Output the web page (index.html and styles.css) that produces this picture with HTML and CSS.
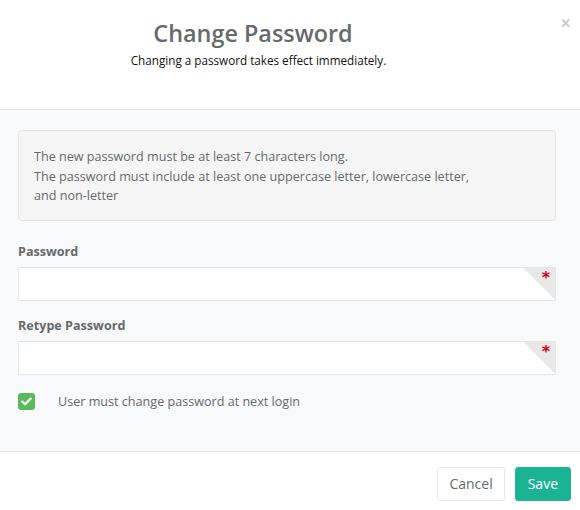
FILE: index.html
```html
<!DOCTYPE html>
<html>
<head>
<meta charset="utf-8">
<link rel="stylesheet" href="styles.css">
</head>
<body>
<div class="modal">
  <div class="modal-header">
    <button class="close" type="button">×</button>
    <h4 class="modal-title">Change Password</h4>
    <div class="modal-sub">Changing a password takes effect immediately.</div>
  </div>
  <div class="modal-body">
    <div class="well">
      The new password must be at least 7 characters long.<br>
      The password must include at least one uppercase letter, lowercase letter, <span class="nowrap">and non-letter</span>
    </div>
    <div class="form-group">
      <label class="label">Password</label>
      <div class="input-wrap">
        <input class="form-control" type="password">
        <span class="req"><span class="req-star">*</span></span>
      </div>
    </div>
    <div class="form-group">
      <label class="label">Retype Password</label>
      <div class="input-wrap">
        <input class="form-control" type="password">
        <span class="req"><span class="req-star">*</span></span>
      </div>
    </div>
    <div class="check-row">
      <span class="checkbox">
        <svg width="11" height="9" viewBox="0 0 11 9"><path d="M1.3 4.6 L4.2 7.3 L9.7 1.6" fill="none" stroke="#fff" stroke-width="2.2" stroke-linecap="round" stroke-linejoin="round"/></svg>
      </span>
      <span class="check-label">User must change password at next login</span>
    </div>
  </div>
  <div class="modal-footer">
    <button class="btn btn-white" type="button">Cancel</button>
    <button class="btn btn-primary" type="button">Save</button>
  </div>
</div>
</body>
</html>
```
FILE: styles.css
```css
* { box-sizing: border-box; }
html, body { margin: 0; padding: 0; background: #fff; }
body {
  font-family: "Open Sans", "Liberation Sans", sans-serif;
  font-size: 12.6px;
  color: #676a6c;
  width: 580px;
  height: 510px;
  overflow: hidden;
}
.modal { width: 580px; }
.modal-header {
  position: relative;
  height: 110px;
  padding: 14px 78px 0 15px;
  border-bottom: 1px solid #e5e5e5;
  text-align: center;
  background: #fff;
}
.modal-title {
  margin: 0 11px 0 0;
  font-size: 23.4px;
  font-weight: 600;
  line-height: 38px;
  color: #676a6c;
}
.modal-sub {
  font-size: 11.7px;
  line-height: 18px;
  color: #111;
  margin-top: -1px;
}
.close {
  position: absolute;
  top: 11px;
  right: 9px;
  border: 0;
  background: none;
  padding: 0;
  font-family: "Open Sans", sans-serif;
  font-size: 19px;
  font-weight: 700;
  line-height: 24px;
  color: #000;
  opacity: 0.2;
}
.modal-body {
  background: #f8f9fa;
  padding: 20px 24px 39px 18px;
  border-bottom: 1px solid #e5e5e5;
}
.well {
  background: #f5f5f5;
  border: 1px solid #e3e3e3;
  border-radius: 4px;
  padding: 16px 15px 14px 15px;
  line-height: 19.6px;
  color: #676a6c;
  margin-bottom: 21px;
}
.nowrap { white-space: nowrap; }
.form-group { margin-bottom: 15px; }
.label {
  display: block;
  font-weight: 700;
  line-height: 20px;
  margin-bottom: 5px;
}
.input-wrap { position: relative; }
.form-control {
  display: block;
  width: 100%;
  height: 34px;
  border: 1px solid #e5e6e7;
  border-radius: 1px;
  background: #fff;
  padding: 6px 12px;
  font-family: inherit;
  font-size: 14px;
  outline: none;
}
.req {
  position: absolute;
  top: 1px;
  right: 1px;
  width: 31px;
  height: 32px;
  background: linear-gradient(45deg, transparent 50%, #e8e8e8 50%);
}
.req-star {
  position: absolute;
  top: 2px;
  right: 5px;
  color: #d0021b;
  font-size: 16px;
  font-weight: 700;
  line-height: 16px;
  font-family: "DejaVu Sans", sans-serif;
}
.check-row {
  display: flex;
  align-items: center;
  margin-top: 17px;
  line-height: 20px;
}
.checkbox {
  width: 17px;
  height: 17px;
  border-radius: 3px;
  background: #5cb85c;
  display: flex;
  align-items: center;
  justify-content: center;
  margin-right: 23px;
}
.check-label { color: #676a6c; }
.modal-footer {
  padding: 15px 9px 15px 15px;
  display: flex;
  justify-content: flex-end;
  gap: 10px;
  background: #fff;
}
.btn {
  height: 34px;
  padding: 6px 12px;
  font-family: inherit;
  font-size: 14px;
  line-height: 20px;
  border-radius: 3px;
  border: 1px solid transparent;
}
.btn-white {
  padding: 6px 11px;
  background: #fff;
  border-color: #e7eaec;
  color: #676a6c;
}
.btn-primary {
  background: #1ab394;
  border-color: #1ab394;
  color: #fff;
}
```
